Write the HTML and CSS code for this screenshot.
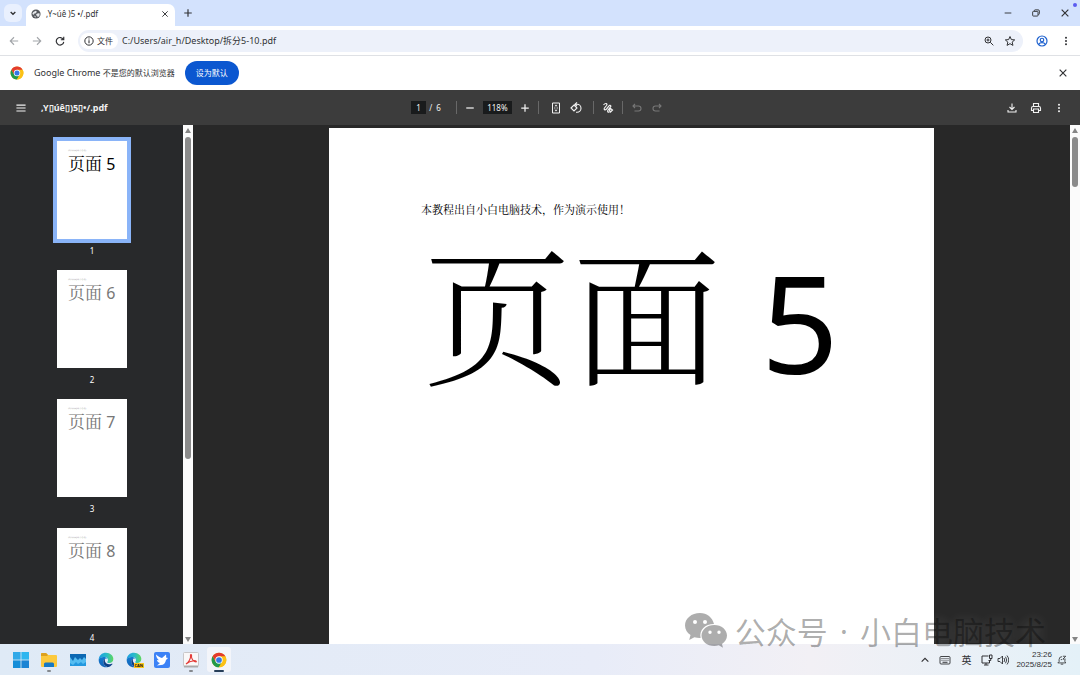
FILE: index.html
```html
<!DOCTYPE html>
<html lang="zh-CN">
<head>
<meta charset="utf-8">
<meta name="viewport" content="width=device-width, initial-scale=1">
<title>拆分5-10.pdf</title>
<link rel="stylesheet" href="styles.css">
</head>
<body>
<svg class="defs" aria-hidden="true">
  <symbol id="close" viewBox="0 0 12 12"><path d="M2 2l8 8M10 2l-8 8" fill="none" stroke="currentColor" stroke-width="1.400"/></symbol>
  <symbol id="dots" viewBox="0 0 12 12"><circle cx="6" cy="2" r="1.2"/><circle cx="6" cy="6" r="1.2"/><circle cx="6" cy="10" r="1.2"/></symbol>
  <symbol id="chrome" viewBox="0 0 48 48">
    <circle cx="24" cy="24" r="22" fill="#fbc116"/>
    <path d="M4.900 13A22 22 0 0 0 24 46l9.500-16.500L24 24 14.500 29.500z" fill="#229a4a"/>
    <path d="M24 13h19.100A22 22 0 0 1 24 46l9.500-16.500z" fill="#fbc116"/>
    <path d="M4.900 13A22 22 0 0 1 43.100 13H24L14.500 29.500z" fill="#e33b2e"/>
    <circle cx="24" cy="24" r="11" fill="#fff"/><circle cx="24" cy="24" r="8.600" fill="#3478e5"/>
  </symbol>
  <symbol id="edge" viewBox="0 0 48 48">
    <linearGradient id="eg1" x1="0" y1="0" x2="1" y2="0"><stop offset="0" stop-color="#1b9de2"/><stop offset=".55" stop-color="#2bbcc8"/><stop offset="1" stop-color="#5fd85a"/></linearGradient>
    <linearGradient id="eg2" x1="0" y1="0" x2="0" y2="1"><stop offset="0" stop-color="#1479cf"/><stop offset="1" stop-color="#1264b8"/></linearGradient>
    <path d="M2 24C2 10 12 2 24 2c13 0 22 9 22 19 0 8-6 12-12 12-5 0-7-2-6-4 2-2 2-3 2-5 0-5-5-9-12-9C9 15 3 20 2 24z" fill="url(#eg1)"/>
    <path d="M2 24c1-6 7-9 15-9 5 0 9 2 11 5-7-2-12 3-12 10 0 9 8 15 15 15C17 49 2 40 2 24z" fill="url(#eg2)"/>
    <path d="M16 30c0-5 2-8 5-9-2 8 3 15 12 16 5 0 8-2 9-2 2 0 2 1 1 2-4 5-8 8-12 8-8 0-15-7-15-15z" fill="#0d4188"/>
  </symbol>
</svg>

<header class="tabstrip">
  <button class="tab-search" aria-label="搜索标签页"><svg class="i8" viewBox="0 0 12 12"><path d="M2.500 4.500L6 8l3.500-3.500" fill="none" stroke="currentColor" stroke-width="2"/></svg></button>
  <div class="tab">
    <svg class="i10" viewBox="0 0 24 24"><circle cx="12" cy="12" r="11" fill="#55585d"/><path d="M5 8l6-4 3 2-2 4-4 1-1 3-4-2zM13 12l4-2 4 1-1 6-4 3-1-4-3-1zM7 16l4 1v4z" fill="#e6e8eb"/></svg>
    <span class="tab-title">,Y~úê )5 •/.pdf</span>
    <button aria-label="关闭标签页"><svg class="i8"><use href="#close"/></svg></button>
  </div>
  <button class="new-tab" aria-label="新标签页"><svg class="i10" viewBox="0 0 12 12"><path d="M6 1.500v9M1.500 6h9" fill="none" stroke="currentColor" stroke-width="1.400"/></svg></button>
  <div class="window-controls">
    <button aria-label="最小化"><svg class="i8" viewBox="0 0 12 12"><path d="M1 6h10" stroke="currentColor" stroke-width="1.400"/></svg></button>
    <button aria-label="还原"><svg class="i8" viewBox="0 0 12 12"><path d="M3.500 3V2.500a1.200 1.200 0 0 1 1.200-1.200h4.600a1.700 1.700 0 0 1 1.700 1.700v4a1.200 1.200 0 0 1-1.200 1.200H9.500M1 4.600q0-1 1-1h6q1 0 1 1v5q0 1-1 1H2q-1 0-1-1z" fill="none" stroke="currentColor" stroke-width="1.400"/></svg></button>
    <button aria-label="关闭"><svg class="i10"><use href="#close"/></svg></button>
  </div>
  <span class="rec-dot"></span>
</header>

<nav class="toolbar">
  <button class="muted" aria-label="后退"><svg class="i10" viewBox="0 0 12 12"><path d="M11 6H1.500M6 1.500L1.500 6 6 10.500" fill="none" stroke="currentColor" stroke-width="1.300"/></svg></button>
  <button class="muted" aria-label="前进"><svg class="i10" viewBox="0 0 12 12"><path d="M1 6h9.500M6 1.500L10.500 6 6 10.500" fill="none" stroke="currentColor" stroke-width="1.300"/></svg></button>
  <button aria-label="刷新"><svg class="i10" viewBox="0 0 12 12"><path d="M10 4.200A4.500 4.500 0 1 0 10.500 7M10.500 1v3.500H7" fill="none" stroke="currentColor" stroke-width="1.400"/></svg></button>
  <div class="omnibox">
    <button class="chip"><svg class="i10" viewBox="0 0 12 12"><circle cx="6" cy="6" r="5" fill="none" stroke="currentColor" stroke-width="1.200"/><path d="M6 5.200v3.500M6 3v1.200" stroke="currentColor" stroke-width="1.300"/></svg>文件</button>
    <input class="url" aria-label="地址" value="C:/Users/air_h/Desktop/拆分5-10.pdf">
    <button aria-label="缩放"><svg class="i10" viewBox="0 0 12 12"><circle cx="4.800" cy="4.800" r="3.600" fill="none" stroke="currentColor" stroke-width="1.200"/><path d="M7.500 7.500l3.700 3.700M4.800 3v3.600M3 4.800h3.600" stroke="currentColor" stroke-width="1.200"/></svg></button>
    <button aria-label="添加书签"><svg class="i12" viewBox="0 0 24 24"><path d="M12 3l2.700 6.200 6.700.6-5.100 4.400 1.600 6.600L12 17.300l-5.900 3.500 1.600-6.600-5.100-4.400 6.700-.6z" fill="none" stroke="currentColor" stroke-width="2"/></svg></button>
  </div>
  <button class="profile" aria-label="个人资料"><svg class="i12" viewBox="0 0 24 24" fill="none" stroke="currentColor" stroke-width="2.400"><circle cx="12" cy="12" r="10"/><circle cx="12" cy="10" r="3.500"/><path d="M5.500 18.500c2.500-4.500 10.500-4.500 13 0"/></svg></button>
  <button aria-label="菜单"><svg class="i10"><use href="#dots"/></svg></button>
</nav>

<section class="infobar">
  <svg class="i14"><use href="#chrome"/></svg>
  <span class="info-text">Google Chrome <span>不是您的默认浏览器</span></span>
  <button class="primary">设为默认</button>
  <button class="dismiss" aria-label="关闭"><svg class="i10"><use href="#close"/></svg></button>
</section>

<section class="pdfbar">
  <div class="pdf-left">
    <button aria-label="目录"><svg class="i10" viewBox="0 0 12 12"><path d="M.5 2.500h11M.5 6h11M.5 9.500h11" stroke="currentColor" stroke-width="1.300"/></svg></button>
    <strong>,Y▯úê▯)5▯•/.pdf</strong>
  </div>
  <div class="pdf-mid">
    <input class="page-no" aria-label="页码" value="1"><span class="total">/&nbsp; 6</span>
    <i class="sep"></i>
    <button aria-label="缩小"><svg class="i10" viewBox="0 0 12 12"><path d="M1.500 6h9" stroke="currentColor" stroke-width="1.500"/></svg></button>
    <input class="zoom" aria-label="缩放比例" value="118%">
    <button aria-label="放大"><svg class="i10" viewBox="0 0 12 12"><path d="M1.500 6h9M6 1.500v9" stroke="currentColor" stroke-width="1.500"/></svg></button>
    <i class="sep after"></i>
    <button aria-label="适合页面"><svg class="i12" viewBox="0 0 24 24"><path d="M5 2h14v20H5z" fill="none" stroke="currentColor" stroke-width="2"/><path d="M12 5l3 3.500H9zM12 19l3-3.500H9z"/><path d="M8 12h2m1 0h2m1 0h2" stroke="currentColor" stroke-width="1.500"/></svg></button>
    <button aria-label="旋转"><svg class="i12" viewBox="0 0 24 24" fill="none" stroke="currentColor" stroke-width="2.200"><path d="M2 12l6-6 6 6-6 6zM11 4.500h3a8 8 0 0 1 0 16h-2M14 .8l-4 3.700 4 3.700"/></svg></button>
    <i class="sep before"></i>
    <button aria-label="绘制"><svg class="i12" viewBox="0 0 24 24" fill="none" stroke="currentColor" stroke-width="2.400"><path d="M3 6c4-5 9-3 6 1l-4 5c-2 3 1 5 4 2l5-6c2-3 5-1 3 2l-5 6c-2 3 0 5 3 4M17 13l4 3-4 4-2-3z"/></svg></button>
    <i class="sep"></i>
    <button class="off" aria-label="撤消"><svg class="i12" viewBox="0 0 24 24" fill="none" stroke="currentColor" stroke-width="2.200"><path d="M8 4L4 8l4 4M4 8h11a5 5 0 0 1 0 10H7"/></svg></button>
    <button class="off" aria-label="重做"><svg class="i12" viewBox="0 0 24 24" fill="none" stroke="currentColor" stroke-width="2.200"><path d="M16 4l4 4-4 4M20 8H9a5 5 0 0 0 0 10h8"/></svg></button>
  </div>
  <div class="pdf-right">
    <button aria-label="下载"><svg class="i12" viewBox="0 0 24 24" fill="none" stroke="currentColor" stroke-width="2.200"><path d="M12 3v12M7 10l5 5 5-5M4 16v4h16v-4"/></svg></button>
    <button aria-label="打印"><svg class="i12" viewBox="0 0 24 24" fill="none" stroke="currentColor" stroke-width="2.200"><path d="M7 8V3h10v5M7 17H3v-5q0-3 3-3h12q3 0 3 3v5h-4M7 14h10v7H7z"/></svg></button>
    <button aria-label="更多"><svg class="i10"><use href="#dots"/></svg></button>
  </div>
</section>

<main class="viewer">
  <aside class="thumbs">
    <figure class="current"><div class="mini"><small>本教程出自小白电脑技术，作为演示使用！</small><b>页面 <em>5</em></b></div><figcaption>1</figcaption></figure>
    <figure><div class="mini"><small>本教程出自小白电脑技术，作为演示使用！</small><b>页面 <em>6</em></b></div><figcaption>2</figcaption></figure>
    <figure><div class="mini"><small>本教程出自小白电脑技术，作为演示使用！</small><b>页面 <em>7</em></b></div><figcaption>3</figcaption></figure>
    <figure><div class="mini"><small>本教程出自小白电脑技术，作为演示使用！</small><b>页面 <em>8</em></b></div><figcaption>4</figcaption></figure>
  </aside>
  <div class="scroll"><i class="up"></i><div class="lane"><i class="thumb long"></i></div><i class="down"></i></div>
  <div class="canvas">
    <article class="page">
      <p class="note">本教程出自小白电脑技术，作为演示使用！</p>
      <h1><span>页面</span><span class="num">5</span></h1>
    </article>
  </div>
  <div class="scroll"><i class="up"></i><div class="lane"><i class="thumb"></i></div><i class="down"></i></div>
</main>

<div class="watermark">
  <svg class="wechat" viewBox="0 0 42 35"><path fill-rule="evenodd" d="M15 0C6.500 0 0 5.500 0 12.500c0 4 2.200 7.300 5.500 9.600L4.200 27l5.200-2.800c2 .6 4 .9 6.200.8C14 17 20 11 29 11 27.500 4.500 22 0 15 0zM10 7a2 2 0 1 1 0 4 2 2 0 0 1 0-4zm10 0a2 2 0 1 1 0 4 2 2 0 0 1 0-4z"/><path fill-rule="evenodd" d="M29.300 12C22 12 16.500 16.700 16.500 22.500S22 33 29.300 33c1.600 0 3-.2 4.500-.7L38 34.700l-1-3.800c3-2 5-5 5-8.400C42 16.700 36.500 12 29.300 12zM25 17.500a1.700 1.700 0 1 1 0 3.400 1.700 1.700 0 0 1 0-3.400zm9 0a1.700 1.700 0 1 1 0 3.400 1.700 1.700 0 0 1 0-3.400z"/></svg>
  <div class="wm-text"><span>公众号</span><span class="mid">·</span><span>小白电脑技术</span></div>
</div>

<footer class="taskbar">
  <div class="apps">
    <button aria-label="开始"><svg class="i16" viewBox="0 0 16 16"><path d="M0 0h7.600v7.600H0z" fill="#31a9e8"/><path d="M8.400 0H16v7.600H8.400z" fill="#2fb6ef"/><path d="M0 8.400h7.600V16H0z" fill="#168ed8"/><path d="M8.400 8.400H16V16H8.400z" fill="#1c84d4"/></svg></button>
    <button class="open" aria-label="文件资源管理器"><svg class="i16" viewBox="0 0 16 16"><path d="M0 2q0-1 1-1h4l2 2h8q1 0 1 1v10q0 1-1 1H1q-1 0-1-1z" fill="#fcc93d"/><path d="M0 2q0-1 1-1h4l2 2-1 1H0z" fill="#dda11e"/><path d="M3 15v-3q0-1.500 1.500-1.500h7q1.500 0 1.500 1.500v3z" fill="#1679c4"/></svg></button>
    <button aria-label="监视器"><svg class="i16" viewBox="0 0 16 16"><path d="M0 2h16v12H0z" fill="#55bdf1"/><path d="M0 2h16v5l-2-2-2 3-2-2-2 2-3-3-2 4-3-4z" fill="#0c68b3"/><path d="M0 11l3 2 3-3 2 2 3-2 2 2 3-2v4H0z" fill="#2398df"/></svg></button>
    <button aria-label="Edge"><svg class="i16"><use href="#edge"/></svg></button>
    <button class="can" aria-label="Edge Canary"><svg class="i16"><use href="#edge"/></svg><span>CAN</span></button>
    <button aria-label="飞鸟"><svg class="i16" viewBox="0 0 16 16"><rect width="16" height="16" rx="2" fill="#3c82f6"/><path d="M2 2.500c2 2 4 3 6 3.500L12 2.500c.3 1 .3 2 0 3L14 6l-2 2c-.5 3-2.500 5-5 5l-4 .5L6 11c-2-.5-3-2-3-3l2 .3C3 6.500 2 4.500 2 2.500z" fill="#fff"/></svg></button>
    <button class="open" aria-label="PDF"><svg class="i16" viewBox="0 0 16 16"><rect x=".5" y=".5" width="15" height="14" rx="1" fill="#faf8f8" stroke="#c9c7c9"/><path d="M1 13.500h14v2H1z" fill="#aaa"/><path d="M3 12c3-2 5-6 4.500-8.500C7 2 9 2 8.500 4 8 7 11 10 13 10c1-.5 0-1.500-2-1.300C8 9 6 9.500 3 12z" fill="none" stroke="#e33c38" stroke-width="1.100"/></svg></button>
    <button class="open active" aria-label="Chrome"><svg class="i16"><use href="#chrome"/></svg></button>
  </div>
  <div class="tray">
    <svg class="i8" viewBox="0 0 12 12"><path d="M1 8.500l5-5 5 5" fill="none" stroke="currentColor" stroke-width="1.700"/></svg>
    <svg class="i12" viewBox="0 0 24 24" fill="none" stroke="currentColor"><rect x="2" y="5" width="20" height="15" rx="2" stroke-width="1.800"/><path d="M5 9h14M5 12.500h14" stroke-dasharray="2 2" stroke-width="2"/><path d="M7 16.500h10" stroke-width="2"/></svg>
    <span class="ime">英</span>
    <div class="pair">
      <svg class="i12" viewBox="0 0 24 24" fill="none" stroke="currentColor" stroke-width="2"><path d="M15 4H2v14h15v-5M6 22h9M10 18v4M17 2h5v7h-5zM19.500 9v4H15"/></svg>
      <svg class="i12" viewBox="0 0 24 24" fill="none" stroke="currentColor" stroke-width="1.800"><path d="M2 9v6h4l5 5V4L6 9zM14 8q3 4 0 8M17 5.500q5 6.500 0 13M20 3q7 9 0 18"/></svg>
    </div>
    <div class="clock"><time>23:26</time><time>2025/8/25</time></div>
    <svg class="i10" viewBox="0 0 24 24" fill="none" stroke="currentColor" stroke-width="2"><path d="M12 4Q5 4 5 11v5l-3 3h19l-2-3v-4M9 22h6M14 3h7l-7 7h7M9 11h3"/></svg>
  </div>
</footer>
</body>
</html>
```
FILE: styles.css
```css
* { box-sizing: border-box; }
body {
  margin: 0;
  height: 100vh;
  display: flex;
  flex-direction: column;
  overflow: hidden;
  position: relative;
  font: 9px/12px "Noto Sans", "Noto Sans CJK SC", sans-serif;
  color: #303134;
  background: #fff;
}
button {
  display: flex;
  align-items: center;
  justify-content: center;
  padding: 0;
  border: 0;
  background: none;
  color: inherit;
  font: inherit;
}
input { border: 0; padding: 0; font: inherit; color: inherit; min-width: 0; }
svg { display: block; flex: none; }
svg:not([fill]) { fill: currentColor; }
.defs { position: absolute; width: 0; height: 0; }
.i8 { width: 8px; height: 8px; }
.i10 { width: 10px; height: 10px; }
.i12 { width: 12px; height: 12px; }
.i14 { width: 14px; height: 14px; }
.i16 { width: 16px; height: 16px; }

.tabstrip { flex: none; height: 26px; display: flex; align-items: center; background: #d3e2fd; padding-left: 4px; position: relative; }
.tab-search { width: 18px; height: 18px; border-radius: 6px; background: #e9f0fe; }
.tab { align-self: flex-end; height: 22px; width: 149px; margin-left: 4px; padding: 0 6px 3px 5px; display: flex; align-items: center; gap: 5px; background: #fff; border-radius: 7px 7px 0 0; }
.tab-title { flex: 1; font-size: 8px; }
.new-tab { margin-left: 8px; }
.window-controls { margin-left: auto; display: flex; gap: 20px; padding-right: 10px; }
.rec-dot { position: absolute; top: 3px; right: 3px; width: 4px; height: 4px; border-radius: 50%; background: #5b5cf0; }

.toolbar { flex: none; height: 30px; display: flex; align-items: center; gap: 13px; padding: 0 9px; border-bottom: 1px solid #dfe1e5; }
.muted { color: #a2a5a9; }
.omnibox { flex: 1; height: 22px; padding: 0 7px 0 2px; display: flex; align-items: center; gap: 10px; border-radius: 11px; background: #edf1fa; }
.chip { height: 16px; padding: 0 5px 0 4px; gap: 3px; border-radius: 8px; background: #fff; font-size: 8px; }
.url { flex: 1; margin-left: -6px; background: none; }
.profile { color: #1f62cf; }

.infobar { flex: none; height: 34px; display: flex; align-items: center; gap: 10px; padding: 0 12px 0 10px; }
.info-text { font-size: 9px; }
.info-text span { font-size: 8px; }
.primary { height: 24px; padding: 0 11px; border-radius: 12px; background: #0b57d0; color: #fff; font-size: 8px; }
.dismiss { margin-left: auto; }

.pdfbar { flex: none; height: 35px; display: grid; grid-template-columns: 1fr auto 1fr; align-items: center; background: #3c3c3c; color: #f1f1f1; padding: 0 16px; font-size: 8px; }
.pdf-left { display: flex; gap: 15px; align-items: center; }
.pdf-left strong { font-size: 9px; }
.pdf-mid { display: flex; align-items: center; gap: 8px; margin-right: 6px; }
.page-no, .zoom { height: 13px; background: #191b1c; text-align: center; }
.page-no { width: 15px; margin-right: -5px; }
.zoom { width: 29px; }
.total { margin-right: 7px; }
.sep { width: 1px; height: 13px; background: #686868; }
.sep.after { margin-right: 3px; }
.sep.before { margin-left: 3px; }
.off { color: #777; }
.pdf-right { display: flex; justify-content: flex-end; gap: 12px; }

.viewer { flex: 1; min-height: 0; display: flex; background: #282828; }
.thumbs { flex: none; width: 183px; overflow: hidden; padding-top: 16px; background: #28292b; color: #fff; }
figure { margin: 0 0 0 1px; height: 129px; display: flex; flex-direction: column; align-items: center; gap: 6px; }
figcaption { font-size: 8px; }
.mini { width: 70px; height: 98px; padding: 8px 0 0 11px; background: #fff; color: #777; overflow: hidden; }
.current .mini { color: #000; outline: 4px solid #8ab4f8; }
.mini small { display: block; font-size: 1px; line-height: 3px; white-space: nowrap; color: #777; }
.mini b { display: block; font: 17px/22px "Noto Serif CJK SC", "Noto Sans CJK SC", serif; white-space: nowrap; }
.mini em { font: 16px/22px "Noto Sans", sans-serif; }

.scroll { flex: none; width: 10px; display: flex; flex-direction: column; align-items: center; justify-content: space-between; padding: 3px 0 2px; background: #fbfbfb; }
.up, .down { border: 3px solid transparent; }
.up { border-top: 0; border-bottom: 5px solid #858585; }
.down { border-bottom: 0; border-top: 5px solid #858585; }
.lane { flex: 1; width: 6px; padding: 4px 0; }
.thumb { display: block; height: 10%; border-radius: 3px; background: #8b8b8b; }
.thumb.long { height: 65%; }

.canvas { flex: 1; min-width: 0; display: flex; justify-content: center; padding-top: 3px; overflow: hidden; }
.page { width: 69%; padding: 73px 0 0 92px; background: #fff; color: #000; font-family: "Noto Serif CJK SC", "Noto Sans CJK SC", serif; }
.note { margin: 0; font-size: 11px; line-height: 16px; white-space: nowrap; }
h1 { margin: 18px 0 0 2px; display: flex; align-items: baseline; gap: 40px; font-size: 149px; line-height: 150px; font-weight: 300; white-space: nowrap; }
.num { font-family: "Noto Sans", sans-serif; font-size: 136px; font-weight: 400; }

.watermark { position: absolute; right: 34px; bottom: 27px; display: flex; align-items: center; gap: 8px; font: 31px/32px "Noto Sans CJK SC", sans-serif; color: rgba(0, 0, 0, .32); text-shadow: 0 0 12px rgba(255, 255, 255, .14); }
.wm-text { display: flex; gap: 12px; }
.watermark .mid { font-family: "Noto Sans", sans-serif; }
.wechat { width: 42px; height: 35px; }

.taskbar { flex: none; height: 31px; display: flex; justify-content: space-between; background: linear-gradient(90deg, #dfeaf6, #e8ecf8 55%, #f2f0f5 75%, #e4f1f8); }
.apps { width: 231px; display: flex; align-items: center; justify-content: space-between; padding-left: 9px; }
.apps button { position: relative; width: 24px; height: 25px; border-radius: 3px; }
.apps .open::after { content: ""; position: absolute; bottom: 0; width: 4px; height: 2px; border-radius: 1px; background: #85898e; }
.apps .active { background: #f3f5fa; }
.apps .active::after { width: 10px; background: #263e59; }
.can span { position: absolute; right: 2px; bottom: 4px; padding: 0 1px; background: #ffc61a; color: #111; font: bold 4px/5px "Noto Sans", sans-serif; }
.tray { display: flex; align-items: center; gap: 10px; padding-right: 13px; }
.ime { font-size: 10px; }
.pair { display: flex; gap: 4px; }
.clock { display: flex; flex-direction: column; align-items: flex-end; margin: 0 -5px 0 -3px; font: 8px/10px "Liberation Sans", sans-serif; }
```
